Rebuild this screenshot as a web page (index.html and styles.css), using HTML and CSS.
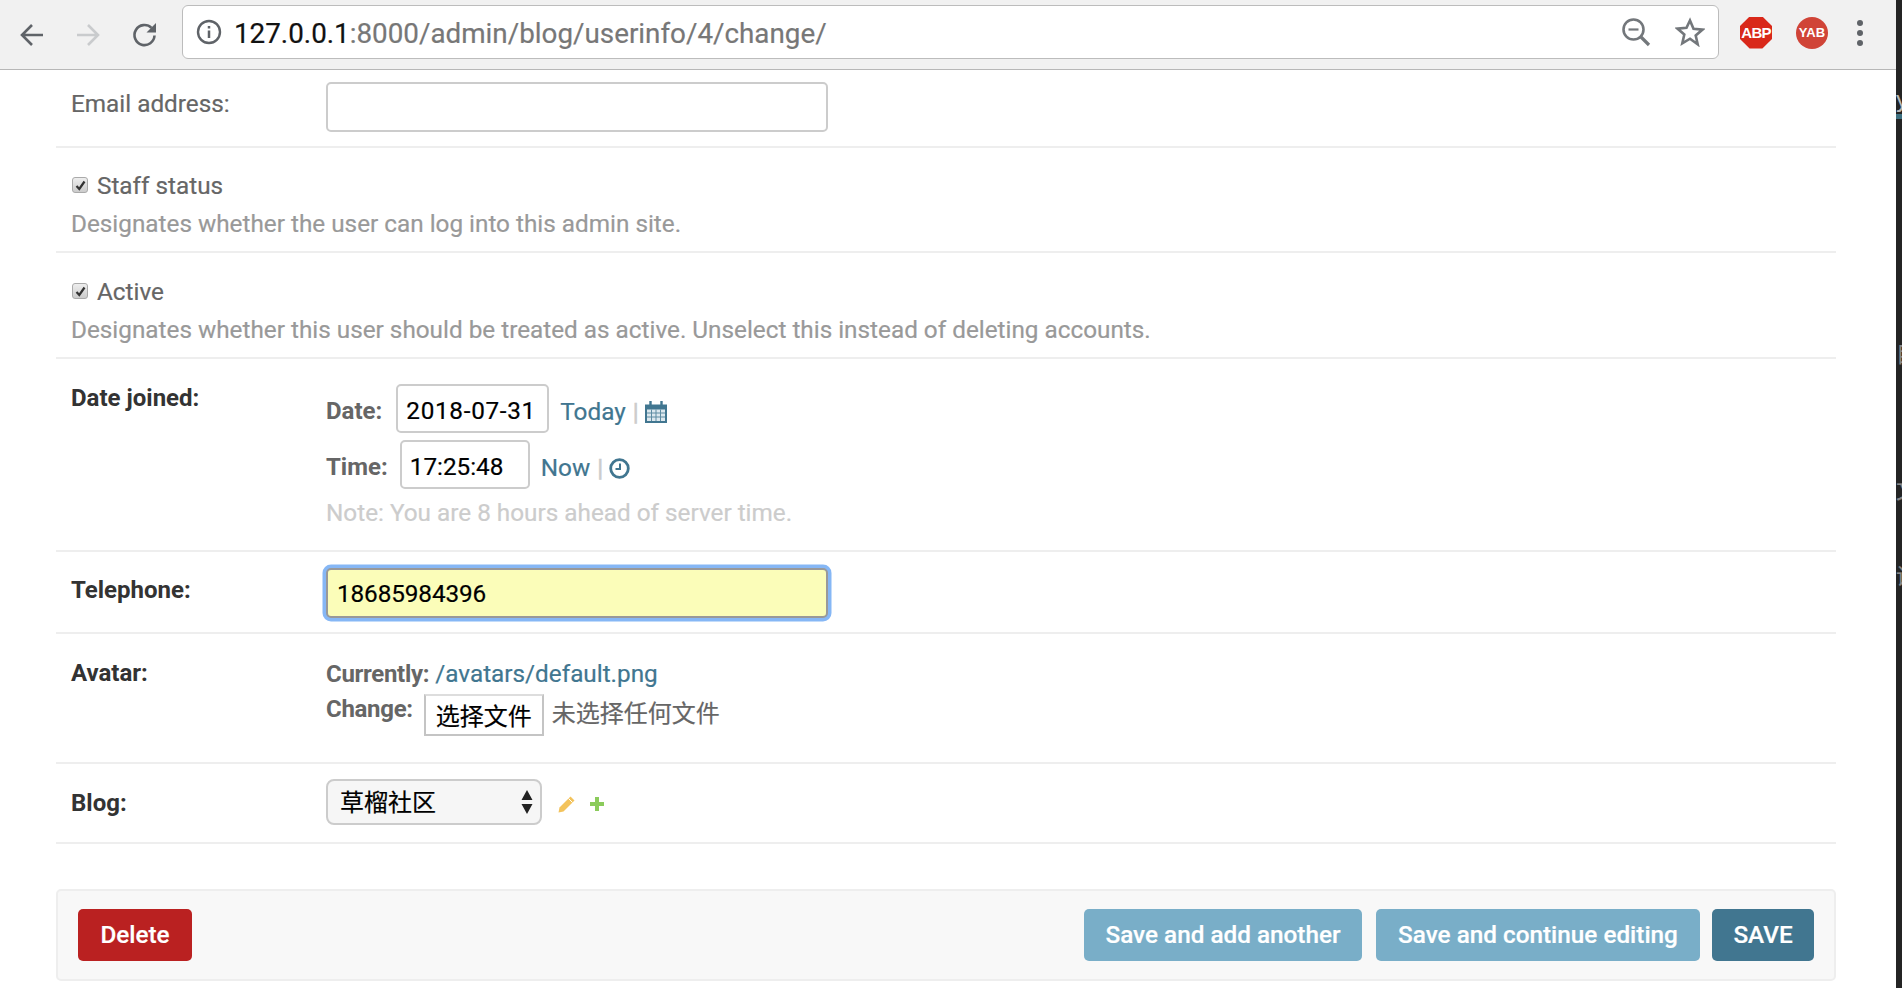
FILE: index.html
```html
<!DOCTYPE html>
<html lang="en">
<head>
<meta charset="utf-8">
<title>Change user info</title>
<link rel="stylesheet" href="styles.css">
</head>
<body>
<div class="window">
  <header class="toolbar">
    <svg class="nav back" width="28" height="28" viewBox="0 0 28 28"><path d="M25 14H5M14 4L4 14l10 10" fill="none" stroke="#5f6368" stroke-width="2.6"/></svg>
    <svg class="nav fwd" width="28" height="28" viewBox="0 0 28 28"><path d="M3 14h20M14 4l10 10-10 10" fill="none" stroke="#c9cbcd" stroke-width="2.6"/></svg>
    <svg class="nav reload" width="30" height="30" viewBox="0 0 30 30"><path d="M24.5 15.5a10 10 0 1 1-3-7.6" fill="none" stroke="#5f6368" stroke-width="2.6"/><path d="M26 3v9.5h-9.500z" fill="#5f6368"/></svg>
    <div class="omnibox">
      <svg class="info" width="26" height="26" viewBox="0 0 26 26"><circle cx="13" cy="13" r="11" fill="none" stroke="#5f6368" stroke-width="2.400"/><path d="M13 11.500v7.500M13 7v2.500" stroke="#5f6368" stroke-width="2.500"/></svg>
      <span class="url"><span class="host">127.0.0.1</span>:8000/admin/blog/userinfo/4/change/</span>
      <svg class="zoom-out" width="30" height="30" viewBox="0 0 30 30"><circle cx="12.500" cy="12.500" r="10" fill="none" stroke="#73777b" stroke-width="2.600"/><path d="M7.500 12.500h10" stroke="#73777b" stroke-width="2.200"/><path d="M19.500 19.500L28 28" stroke="#73777b" stroke-width="3.200"/></svg>
      <svg class="star" width="30" height="30" viewBox="0 0 30 30"><path d="M15 3.500l3.500 8.300 9 .8-6.800 5.900 2 8.800L15 21.700l-7.700 4.600 2-8.800-6.800-5.900 9-.8z" fill="none" stroke="#73777b" stroke-width="2.600"/></svg>
    </div>
    <div class="ext abp">ABP</div>
    <div class="ext yab">YAB</div>
    <div class="menu"><i></i><i></i><i></i></div>
  </header>

  <main class="content">
    <div class="form-row first">
      <label class="lbl">Email address:</label>
      <input class="text-input" type="text">
    </div>
    <div class="form-row check-row staff">
      <div class="check-line">
        <span class="checkbox"><svg width="11" height="11" viewBox="0 0 11 11"><path d="M1.500 6l2.800 3L9.500 1.500" fill="none" stroke="#333" stroke-width="2.200"/></svg></span>
        <label class="check-label">Staff status</label>
      </div>
      <p class="help">Designates whether the user can log into this admin site.</p>
    </div>
    <div class="form-row check-row">
      <div class="check-line">
        <span class="checkbox"><svg width="11" height="11" viewBox="0 0 11 11"><path d="M1.500 6l2.800 3L9.500 1.500" fill="none" stroke="#333" stroke-width="2.200"/></svg></span>
        <label class="check-label">Active</label>
      </div>
      <p class="help">Designates whether this user should be treated as active. Unselect this instead of deleting accounts.</p>
    </div>
    <div class="form-row date-row">
      <label class="lbl req">Date joined:</label>
      <div class="field">
        <div class="dt-line date-line">
          <span class="dt-label">Date:</span>
          <input class="dt-input date-input" type="text" value="2018-07-31">
          <a class="link">Today</a><span class="sep">|</span>
          <svg class="cal" width="22" height="23" viewBox="0 0 22 23"><path d="M0 4.500h22V23H0z" fill="#417690"/><path d="M2 9.500h18v11.500H2z" fill="#dce8ee"/><path d="M6.500 9.500v11.500M11 9.500v11.500M15.500 9.500v11.500M2 13h18M2 17h18" stroke="#5f8ca2" stroke-width="1"/><path d="M5.500 1v5M16.500 1v5" stroke="#417690" stroke-width="2.400"/></svg>
        </div>
        <div class="dt-line time-line">
          <span class="dt-label">Time:</span>
          <input class="dt-input time-input" type="text" value="17:25:48">
          <a class="link">Now</a><span class="sep">|</span>
          <svg class="clock" width="21" height="21" viewBox="0 0 21 21"><circle cx="10.500" cy="10.500" r="8.800" fill="none" stroke="#417690" stroke-width="2.800"/><path d="M11 5.500v5.500H6.500" fill="none" stroke="#417690" stroke-width="2"/></svg>
        </div>
        <p class="note">Note: You are 8 hours ahead of server time.</p>
      </div>
    </div>
    <div class="form-row tel-row">
      <label class="lbl req">Telephone:</label>
      <input class="text-input tel-input" type="text" value="18685984396">
    </div>
    <div class="form-row avatar-row">
      <label class="lbl req">Avatar:</label>
      <div class="field">
        <div class="current"><span class="dt-label plain">Currently:</span> <a class="link">/avatars/default.png</a></div>
        <div class="change">
          <span class="dt-label plain change-label">Change:</span>
          <button class="file-btn" type="button">选择文件</button>
          <span class="no-file">未选择任何文件</span>
        </div>
      </div>
    </div>
    <div class="form-row blog-row">
      <label class="lbl req">Blog:</label>
      <div class="select">
        <span class="select-text">草榴社区</span>
        <svg width="12" height="26" viewBox="0 0 12 26"><path d="M6 1l5.500 10H.5zM6 25L.5 15h11z" fill="#222"/></svg>
      </div>
      <svg class="pencil" width="17" height="17" viewBox="0 0 17 17"><path d="M12.500 0.500l4 4L5.500 15.500 0.500 16.500l1-5z" fill="#f3c35c"/><path d="M10.500 2.500l4 4" stroke="#fff" stroke-width="1"/></svg>
      <svg class="plus" width="14" height="14" viewBox="0 0 14 14"><path d="M5 0h4v5h5v4H9v5H5V9H0V5h5z" fill="#8bcb5b"/></svg>
    </div>
    <div class="submit-row">
      <a class="btn delete">Delete</a>
      <a class="btn light add">Save and add another</a>
      <a class="btn light cont">Save and continue editing</a>
      <a class="btn save">SAVE</a>
    </div>
  </main>
</div>
<aside class="behind">
  <span class="teal">y</span>
  <span class="g1">目</span>
  <span class="g2">文</span>
  <span class="g3">设</span>
</aside>
</body>
</html>
```

FILE: styles.css
```css
* { box-sizing: border-box; }
html, body { margin: 0; height: 100%; }
body {
  display: flex;
  height: 988px;
  overflow: hidden;
  background: #fff;
  color: #666;
  font-family: Roboto, "Noto Sans CJK SC", sans-serif;
  font-size: 24.3px;
  -webkit-text-stroke: 0.2px;
}
.window { width: 1896px; flex: none; }
.behind {
  flex: 1;
  background: #242424;
  color: #888;
  overflow: hidden;
  display: flex;
  flex-direction: column;
  font-size: 22px;
  line-height: 26px;
  font-family: "Noto Sans CJK SC", sans-serif;
}
.behind span { display: block; }
.teal { margin-top: 84px; padding-bottom: 4px; border-bottom: 5px solid #3c6f80; color: #bbb; }
.g1 { margin-top: 220px; }
.g2 { margin-top: 110px; }
.g3 { margin-top: 60px; }

.toolbar {
  height: 70px;
  background: #f1f1f1;
  border-bottom: 1px solid #b7b7b7;
  display: flex;
  align-items: center;
}
.nav { flex: none; }
.back { margin-left: 18px; }
.fwd { margin-left: 28px; }
.reload { margin-left: 28px; margin-right: 22px; }
.omnibox {
  width: 1537px;
  height: 54px;
  margin-top: -5px;
  background: #fff;
  border: 1.500px solid #bcbcbc;
  border-radius: 6px;
  display: flex;
  align-items: center;
  padding-left: 13px;
}
.url { margin-left: 12px; flex: 1; padding-top: 2px; font-family: Roboto, sans-serif; font-size: 27.8px; color: #777; }
.host { color: #111; }
.zoom-out { margin-right: 24px; }
.star { margin-right: 13px; }
.ext {
  flex: none;
  color: #fff;
  font-weight: 700;
  text-align: center;
  font-family: "Liberation Sans", sans-serif;
  width: 32px;
  height: 32px;
  line-height: 32px;
  margin-top: -4px;
  -webkit-text-stroke: 0;
}
.abp {
  margin-left: 21px;
  background: #d9281a;
  font-size: 15px;
  letter-spacing: -0.8px;
  clip-path: polygon(30% 0, 70% 0, 100% 30%, 100% 70%, 70% 100%, 30% 100%, 0 70%, 0 30%);
}
.yab {
  margin-left: 24px;
  background: #d04437;
  border-radius: 50%;
  font-size: 13px;
}
.menu { margin-left: 29px; margin-top: -4px; display: flex; flex-direction: column; gap: 4px; }
.menu i { display: block; width: 6px; height: 6px; border-radius: 50%; background: #5f6368; }

.content { padding: 0 60px 0 56px; }
.form-row {
  border-bottom: 2px solid #eee;
  padding: 0 15px;
  display: flex;
  align-items: flex-start;
}
.lbl { width: 255px; flex: none; }
.req { font-weight: 700; color: #333; font-size: 24px; -webkit-text-stroke: 0; }
.first { height: 78px; padding-top: 12px; }
.first .lbl { margin-top: 7px; }
.text-input {
  width: 502px;
  height: 50px;
  border: 2px solid #ccc;
  border-radius: 5px;
  background: #fff;
  padding: 1px 9px 0;
  font: 24.3px Roboto, sans-serif;
  color: #000;
  outline: none;
}
.check-row { display: block; height: 106px; padding-top: 23px; }
.staff { height: 105px; padding-top: 22px; }
.check-line { display: flex; align-items: center; height: 30px; }
.checkbox {
  width: 16px;
  height: 16px;
  margin: 0 9px 0 1px;
  border: 1px solid #aaa;
  border-radius: 3px;
  background: linear-gradient(#eee, #ccc);
  display: flex;
  align-items: center;
  justify-content: center;
}
.help { margin: 9px 0 0; color: #999; }

.date-row { height: 193px; padding-top: 25px; }
.date-row .lbl { margin-top: 0; }
.field { flex: 1; }
.dt-line { display: flex; align-items: center; }
.time-line { margin-top: 7px; }
.dt-label { font-weight: 700; color: #666; font-size: 24px; -webkit-text-stroke: 0; }
.dt-line .dt-label, .dt-line .link, .dt-line .sep { margin-top: 5px; }
.date-input { width: 153px; margin-left: 14px; letter-spacing: 0.7px; }
.time-input { width: 130px; margin-left: 12px; }
.dt-input {
  height: 49px;
  border: 2px solid #ccc;
  border-radius: 5px;
  padding: 4px 8px 0;
  font: 24.3px Roboto, sans-serif;
  color: #000;
  background: #fff;
  outline: none;
}
.link { color: #417690; margin-left: 11px; }
.sep { color: #ccc; margin: 0 7px; -webkit-text-stroke: 0.6px #ccc; }
.time-line .sep { margin-right: 6px; }
.date-line .sep { margin-right: 6px; }
.cal { margin-top: 5px; }
.clock { margin-top: 8px; }
.note { margin: 9px 0 0; color: #ccc; }

.tel-row { height: 82px; padding-top: 16px; }
.tel-row .lbl { margin-top: 8px; }
.tel-input {
  background: #fbfdb9;
  border: 2px solid #999;
  box-shadow: 0 0 0 3.500px #86b7f5;
  letter-spacing: -0.1px;
}
.avatar-row { height: 130px; padding-top: 22px; }
.avatar-row .lbl { margin-top: 3px; }
.avatar-row .field { margin-top: 3px; }
.current { line-height: 30px; }
.current .link { margin-left: 0; }
.plain { letter-spacing: -0.3px; }
.change { display: flex; align-items: flex-start; margin-top: 4px; }
.change-label { line-height: 30px; margin-top: 1px; }
.file-btn {
  width: 120px;
  height: 42px;
  margin: 1px 0 0 11px;
  border: 2px solid #c4c4c4;
  border-top-color: #ddd;
  background: #fff;
  padding: 0 0 2px;
  color: #000;
  font: 24px "Noto Sans CJK SC", sans-serif;
}
.no-file { margin: 3px 0 0 8px; font-size: 24px; font-family: "Noto Sans CJK SC", sans-serif; line-height: 32px; color: #666; }

.blog-row { height: 80px; padding-top: 15px; }
.blog-row .lbl { margin-top: 10px; }
.select {
  width: 216px;
  height: 46px;
  border: 2px solid #ccc;
  border-radius: 8px;
  background: #f6f6f6;
  padding: 0 7px 0 12px;
  display: flex;
  align-items: center;
  justify-content: space-between;
  color: #000;
  font-family: "Noto Sans CJK SC", sans-serif;
  font-size: 24px;
}
.select-text { margin-top: -3px; }
.pencil { margin: 17px 0 0 16px; }
.plus { margin: 18px 0 0 15px; }

.submit-row {
  margin-top: 45px;
  height: 92px;
  border: 2px solid #eee;
  border-radius: 5px;
  background: #f8f8f8;
  padding: 18px 20px;
  display: flex;
}
.btn {
  height: 52px;
  line-height: 51px;
  border-radius: 5px;
  color: #fff;
  font-weight: 500;
  text-align: center;
}
.delete { width: 114px; background: #ba2121; margin-right: auto; }
.light { background: #79aec8; }
.add { width: 278px; }
.cont { width: 324px; margin-left: 14px; }
.save { width: 102px; margin-left: 12px; background: #417690; }
```
